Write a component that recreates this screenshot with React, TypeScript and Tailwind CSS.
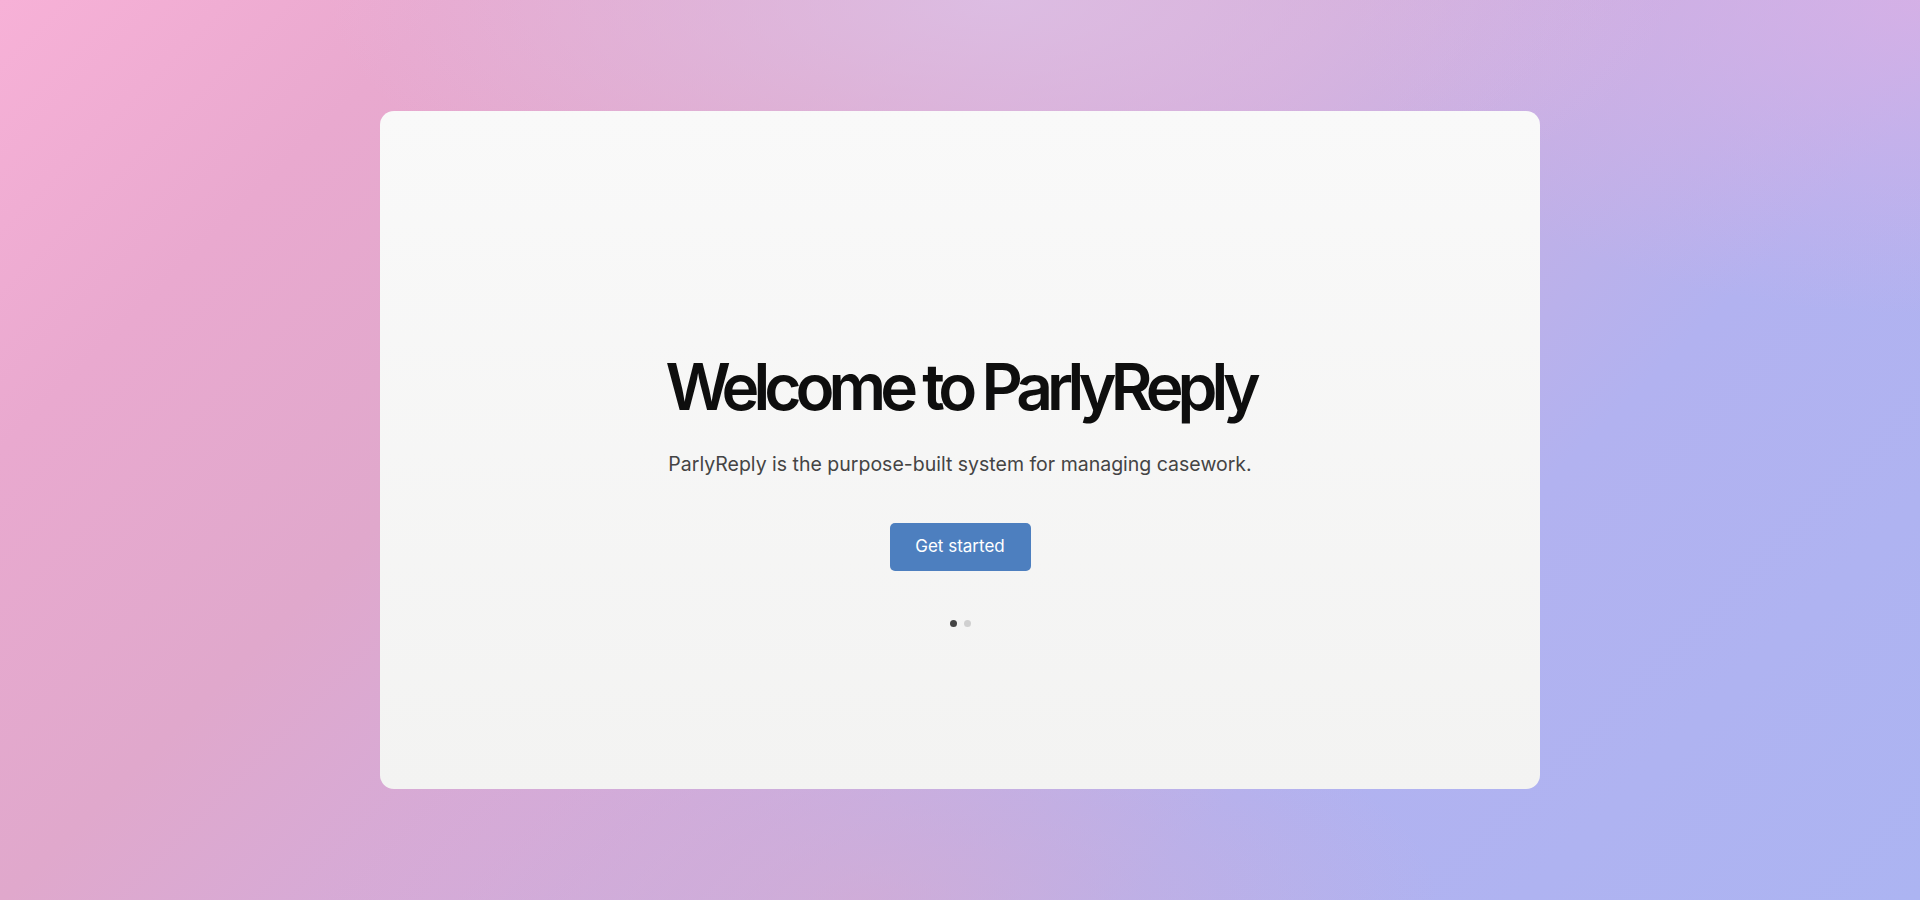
export default function App() {
  return (
    <div className="min-h-screen w-full flex items-center justify-center bg-[radial-gradient(ellipse_35%_28%_at_52%_0%,rgba(220,192,230,0.85),transparent),radial-gradient(ellipse_30%_35%_at_100%_0%,rgba(222,176,228,0.75),transparent),radial-gradient(ellipse_30%_25%_at_45%_100%,rgba(218,170,206,0.6),transparent),linear-gradient(135deg,#f7b1d7_0%,#e9a9cf_16%,#e0a8cc_32%,#d3abda_48%,#c2b0e6_60%,#b2b2f0_72%,#acb4f2_100%)] font-['Inter',sans-serif]">
      <div className="w-[1160px] h-[678px] rounded-[14px] bg-[linear-gradient(180deg,#f9f9f9,#f3f3f2)] flex flex-col items-center justify-center pt-[82px]">
        <h1 className="text-[64px] leading-none font-semibold tracking-[-0.093em] text-[#0e0e0e]">
          Welcome to ParlyReply
        </h1>
        <p className="mt-[31px] text-[19.5px] text-[#444444]">
          ParlyReply is the purpose-built system for managing casework.
        </p>
        <button className="mt-[43px] h-[48px] w-[141px] rounded-[5px] bg-[#4d7fbf] text-white text-[17px] font-normal">
          Get started
        </button>
        <div className="mt-[49px] flex gap-[7px]">
          <span className="w-[7px] h-[7px] rounded-full bg-[#444444]" />
          <span className="w-[7px] h-[7px] rounded-full bg-[#d0d0d0]" />
        </div>
      </div>
    </div>
  );
}
